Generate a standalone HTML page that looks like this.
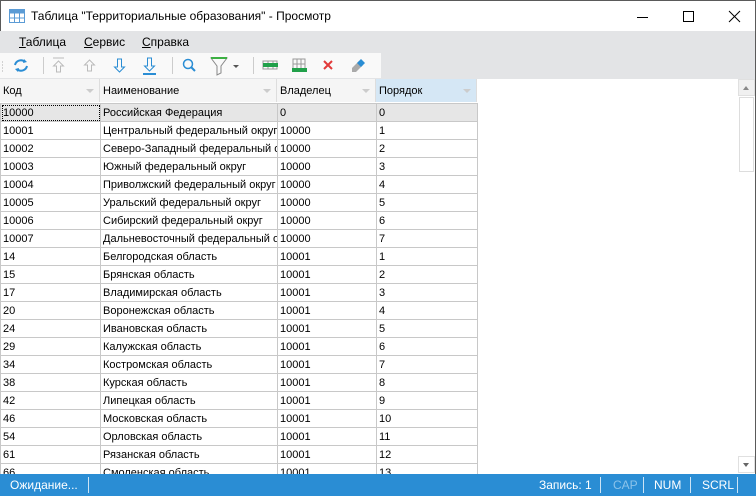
<!DOCTYPE html>
<html><head><meta charset="utf-8"><style>
*{margin:0;padding:0;box-sizing:border-box}
body{width:756px;height:496px;overflow:hidden;background:#fff;font-family:"Liberation Sans","DejaVu Sans",sans-serif;font-size:11px;color:#000;position:relative}
.abs{position:absolute}
.title{left:0;top:0;width:756px;height:31px;background:#fff;border:1px solid #5a5a5a;border-bottom:none}
.title span{position:absolute;left:30px;top:8px;font-size:12px}
.menu{left:0;top:31px;width:755px;height:48px;background:#e3e4e6}
.menu span{position:absolute;top:4px;font-size:12px}
.tb{left:0;top:53px;width:381px;height:25px;background:#f9f9f9}
.hdr{top:79px;height:23px;background:#f5f5f5;border-right:1px solid #ddd;padding:6px 3px;font-size:11px}
.hdr i{position:absolute;right:5px;top:10px;border:4px solid transparent;border-top:4px solid #ccc}
table{position:absolute;left:0;top:103px;border-collapse:collapse;table-layout:fixed;width:477px}
td{height:18px;border:1px solid #c8c8c8;padding:1px 2px 0;font-size:11px;white-space:nowrap;overflow:hidden;line-height:16px}
tr.sel td{background:#e6e6e6}
.status{left:0;top:474px;width:756px;height:22px;background:#2a8dd4;color:#fff;font-size:12px}
.status span{position:absolute;top:4px}
.sep{position:absolute;top:3px;width:1px;height:16px;background:#cde4f5}
</style></head><body>
<div class="abs title">
<svg class="abs" style="left:8px;top:8px" width="16" height="14"><rect x="0.5" y="0.5" width="15" height="13" fill="#fff" stroke="#5b9bd5"/><rect x="0.5" y="0.5" width="15" height="4" fill="#5b9bd5"/><path d="M5.5 0v14M10.5 0v14M0 9h16" stroke="#5b9bd5"/></svg>
<span>Таблица "Территориальные образования" - Просмотр</span>
<svg class="abs" style="left:636px;top:9px" width="110" height="14"><path d="M0 7.5h11" stroke="#000"/><rect x="46.5" y="1.5" width="10" height="10" fill="none" stroke="#000"/><path d="M92 1l11 11M103 1l-11 11" stroke="#000"/></svg>
</div>
<div class="abs menu">
<span style="left:19px"><u>Т</u>аблица</span><span style="left:84px"><u>С</u>ервис</span><span style="left:142px"><u>С</u>правка</span>
</div>
<div class="abs tb">
<svg width="381" height="25">
<path d="M2 9h1M2 12h1M2 15h1M2 18h1" stroke="#aaa"/>
<path d="M15 12a6 6 0 0 1 10-3M27 13a6 6 0 0 1-10 3" fill="none" stroke="#2a8dd4" stroke-width="2"/>
<path d="M24 6l3 3-4 1zM18 19l-3-3 4-1z" fill="#2a8dd4"/>
<path d="M43.5 4v17" stroke="#ccc"/>
<path d="M53 5h11M58.5 8l-5 5h3v6h4v-6h3z" fill="none" stroke="#bbb"/>
<path d="M89.5 7l-5 5h3v6h4v-6h3z" fill="none" stroke="#bbb"/>
<path d="M119.5 19l-5-5h3V6h4v8h3z" fill="none" stroke="#2a8dd4"/>
<path d="M149.5 18l-5-5h3V5h4v8h3z" fill="none" stroke="#2a8dd4"/><path d="M143 21h13" stroke="#2a8dd4" stroke-width="2"/>
<path d="M172.5 4v17" stroke="#ccc"/>
<circle cx="188" cy="11" r="4.5" fill="none" stroke="#2a8dd4" stroke-width="1.5"/><path d="M191 14l4 4" stroke="#2a8dd4" stroke-width="2"/>
<path d="M211 5h16l-6 8v7l-4 2v-9z" fill="none" stroke="#888"/><path d="M211 5h16" stroke="#3cb043" stroke-width="2"/>
<path d="M233 12l3 3 3-3z" fill="#555"/>
<path d="M253.5 4v17" stroke="#ccc"/>
<path d="M263 8h14v8h-14zM268 8v8M273 8v8M263 12h14" fill="none" stroke="#999"/><rect x="263" y="10" width="15" height="4" fill="#21a04a"/>
<path d="M293 6h12v10h-12zM297 6v10M301 6v10M293 11h12" fill="none" stroke="#999"/><rect x="292" y="15" width="15" height="4" fill="#21a04a"/>
<path d="M324 8l8 8M332 8l-8 8" stroke="#e23a3a" stroke-width="2"/>
<path d="M352 15l7-7 4 4-7 7h-4z" fill="#aaa"/><path d="M357 10l4-4 4 4-4 4z" fill="#2a8dd4"/>
</svg>
</div>
<div class="abs hdr" style="left:0;width:100px">Код<i></i></div>
<div class="abs hdr" style="left:100px;width:177px">Наименование<i></i></div>
<div class="abs hdr" style="left:277px;width:99px">Владелец<i></i></div>
<div class="abs hdr" style="left:376px;width:101px;background:#d5e7f5">Порядок<i></i></div>
<table>
<colgroup><col style="width:100px"><col style="width:177px"><col style="width:99px"><col style="width:101px"></colgroup>
<tr class="sel"><td style="outline:1px dotted #000;outline-offset:-2px">10000</td><td>Российская Федерация</td><td>0</td><td>0</td></tr>
<tr><td>10001</td><td>Центральный федеральный округ</td><td>10000</td><td>1</td></tr>
<tr><td>10002</td><td>Северо-Западный федеральный округ</td><td>10000</td><td>2</td></tr>
<tr><td>10003</td><td>Южный федеральный округ</td><td>10000</td><td>3</td></tr>
<tr><td>10004</td><td>Приволжский федеральный округ</td><td>10000</td><td>4</td></tr>
<tr><td>10005</td><td>Уральский федеральный округ</td><td>10000</td><td>5</td></tr>
<tr><td>10006</td><td>Сибирский федеральный округ</td><td>10000</td><td>6</td></tr>
<tr><td>10007</td><td>Дальневосточный федеральный округ</td><td>10000</td><td>7</td></tr>
<tr><td>14</td><td>Белгородская область</td><td>10001</td><td>1</td></tr>
<tr><td>15</td><td>Брянская область</td><td>10001</td><td>2</td></tr>
<tr><td>17</td><td>Владимирская область</td><td>10001</td><td>3</td></tr>
<tr><td>20</td><td>Воронежская область</td><td>10001</td><td>4</td></tr>
<tr><td>24</td><td>Ивановская область</td><td>10001</td><td>5</td></tr>
<tr><td>29</td><td>Калужская область</td><td>10001</td><td>6</td></tr>
<tr><td>34</td><td>Костромская область</td><td>10001</td><td>7</td></tr>
<tr><td>38</td><td>Курская область</td><td>10001</td><td>8</td></tr>
<tr><td>42</td><td>Липецкая область</td><td>10001</td><td>9</td></tr>
<tr><td>46</td><td>Московская область</td><td>10001</td><td>10</td></tr>
<tr><td>54</td><td>Орловская область</td><td>10001</td><td>11</td></tr>
<tr><td>61</td><td>Рязанская область</td><td>10001</td><td>12</td></tr>
<tr><td>66</td><td>Смоленская область</td><td>10001</td><td>13</td></tr>
</table>
<div class="abs" style="left:738px;top:79px;width:17px;height:395px;background:#fff">
<div class="abs" style="left:0;top:0;width:17px;height:17px;background:#f0f0f0;border:1px solid #e0e0e0"></div>
<div class="abs" style="left:5px;top:7px;border:3.5px solid transparent;border-bottom:4px solid #888;border-top:none"></div>
<div class="abs" style="left:1px;top:18px;width:15px;height:75px;border:1px solid #ddd;background:#fff"></div>
<div class="abs" style="left:0;top:377px;width:17px;height:17px;border:1px solid #e0e0e0;background:#fff"></div>
<div class="abs" style="left:5px;top:384px;border:3.5px solid transparent;border-top:4px solid #666;border-bottom:none"></div>
</div>
<div class="abs" style="left:755px;top:0;width:1px;height:496px;background:#5a5a5a"></div>
<div class="abs status">
<span style="left:10px">Ожидание...</span>
<div class="sep" style="left:88px"></div>
<span style="left:539px">Запись: 1</span>
<div class="sep" style="left:600px"></div>
<span style="left:613px;color:#8cc3ea">CAP</span>
<div class="sep" style="left:643px"></div>
<span style="left:654px">NUM</span>
<div class="sep" style="left:690px"></div>
<span style="left:702px">SCRL</span>
<div class="sep" style="left:737px"></div>
</div>
</body></html>
